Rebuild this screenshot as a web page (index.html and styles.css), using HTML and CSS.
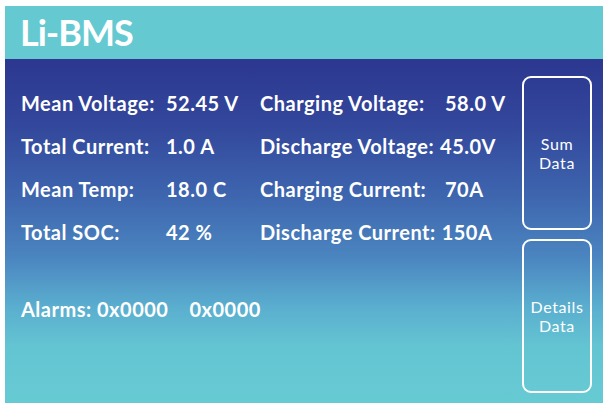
FILE: index.html
```html
<!DOCTYPE html>
<html>
<head>
<meta charset="utf-8">
<link rel="stylesheet" href="styles.css">
</head>
<body>
<div class="screen">
  <div class="header">Li-BMS</div>
  <div class="main">
    <div class="content">
      <div class="grid">
        <div class="lbl">Mean Voltage:</div><div class="val">52.45 V</div>
        <div class="pair"><span class="lbl wide">Charging Voltage:</span><span class="val">58.0 V</span></div>
        <div class="lbl">Total Current:</div><div class="val">1.0 A</div>
        <div class="pair"><span class="lbl">Discharge Voltage:</span><span class="val">45.0V</span></div>
        <div class="lbl">Mean Temp:</div><div class="val">18.0 C</div>
        <div class="pair"><span class="lbl wide">Charging Current:</span><span class="val">70A</span></div>
        <div class="lbl">Total SOC:</div><div class="val">42 %</div>
        <div class="pair"><span class="lbl">Discharge Current:</span><span class="val">150A</span></div>
      </div>
      <div class="alarms"><span>Alarms: 0x0000</span><span>0x0000</span></div>
    </div>
    <div class="buttons">
      <div class="btn">Sum<br>Data</div>
      <div class="btn">Details<br>Data</div>
    </div>
  </div>
</div>
</body>
</html>
```
FILE: styles.css
```css
html, body {
  margin: 0;
  padding: 0;
  background: #ffffff;
}
body {
  font-family: Lato, "Open Sans", sans-serif;
  color: #ffffff;
}
.screen {
  width: 598px;
  height: 397px;
  margin: 6px 0 0 5px;
  display: flex;
  flex-direction: column;
}
.header {
  height: 53px;
  background: #65c9d2;
  padding-left: 15px;
  font-size: 36px;
  font-weight: 700;
  line-height: 53px;
  letter-spacing: -1px;
}
.main {
  flex: 1;
  display: flex;
  background: linear-gradient(#2c3790 0%, #33489c 20%, #3e66af 40%, #4b86c0 58%, #5aaecf 72%, #64c5d2 84%, #66cad3 100%);
}
.content {
  flex: 1;
  padding: 22px 0 0 16px;
}
.grid {
  display: grid;
  grid-template-columns: 145px 94px auto;
  grid-auto-rows: 43px;
  align-items: center;
  font-size: 20px;
  font-weight: 700;
  letter-spacing: 0.5px;
}
.grid .lbl, .grid .val {
  white-space: nowrap;
}
.pair {
  display: flex;
  gap: 6px;
  white-space: nowrap;
}
.pair .wide {
  min-width: 179px;
}
.alarms {
  margin-top: 34px;
  height: 43px;
  display: flex;
  align-items: center;
  gap: 21px;
  font-size: 20px;
  font-weight: 700;
  letter-spacing: 0.5px;
}
.buttons {
  width: 70px;
  margin: 17px 11px 10px 0;
  display: flex;
  flex-direction: column;
  gap: 9px;
}
.btn {
  flex: 1;
  border: 2px solid #ffffff;
  border-radius: 9px;
  display: flex;
  align-items: center;
  justify-content: center;
  text-align: center;
  font-size: 16px;
  line-height: 19px;
  letter-spacing: 0.6px;
  font-weight: 400;
}
```
